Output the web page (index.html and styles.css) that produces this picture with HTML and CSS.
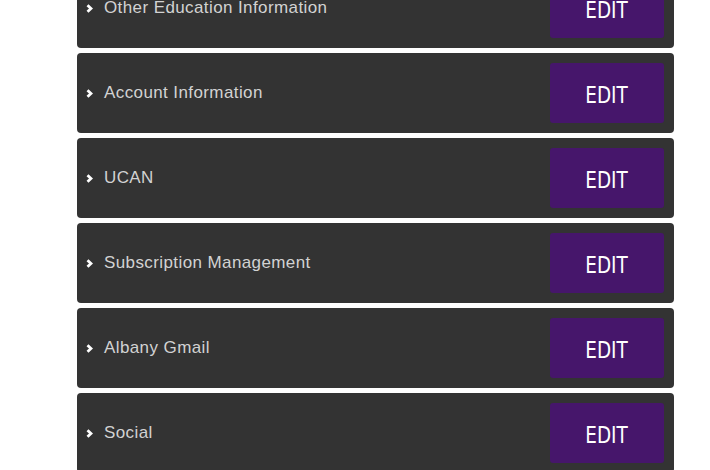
FILE: index.html
```html
<!DOCTYPE html>
<html lang="en">
<head>
    <meta charset="UTF-8">
    <title>Profile Sections</title>
    <link rel="stylesheet" href="styles.css">
</head>
<body>
<div class="container">
    <div class="section-list">
        <div class="section-row">
            <span class="section-title"><svg class="chevron" viewBox="0 0 7 9"><polyline points="1.5,1.2 5,4.5 1.5,7.8"/></svg>Other Education Information</span>
            <button class="edit-button"><span>EDIT</span></button>
        </div>
        <div class="section-row">
            <span class="section-title"><svg class="chevron" viewBox="0 0 7 9"><polyline points="1.5,1.2 5,4.5 1.5,7.8"/></svg>Account Information</span>
            <button class="edit-button"><span>EDIT</span></button>
        </div>
        <div class="section-row">
            <span class="section-title"><svg class="chevron" viewBox="0 0 7 9"><polyline points="1.5,1.2 5,4.5 1.5,7.8"/></svg>UCAN</span>
            <button class="edit-button"><span>EDIT</span></button>
        </div>
        <div class="section-row">
            <span class="section-title"><svg class="chevron" viewBox="0 0 7 9"><polyline points="1.5,1.2 5,4.5 1.5,7.8"/></svg>Subscription Management</span>
            <button class="edit-button"><span>EDIT</span></button>
        </div>
        <div class="section-row">
            <span class="section-title"><svg class="chevron" viewBox="0 0 7 9"><polyline points="1.5,1.2 5,4.5 1.5,7.8"/></svg>Albany Gmail</span>
            <button class="edit-button"><span>EDIT</span></button>
        </div>
        <div class="section-row">
            <span class="section-title"><svg class="chevron" viewBox="0 0 7 9"><polyline points="1.5,1.2 5,4.5 1.5,7.8"/></svg>Social</span>
            <button class="edit-button"><span>EDIT</span></button>
        </div>
    </div>
</div>
</body>
</html>
```

FILE: styles.css
```css
:root {
    --panel: #333333;
    --purple: #46166b;
    --text: #d2d2d2;
    --light: #fff;
}
* {
    margin: 0;
    padding: 0;
    box-sizing: border-box;
}
body {
    background: var(--light);
    font-family: 'Liberation Sans', Arial, sans-serif;
    overflow: hidden;
}
.container {
    width: 597px;
    margin-left: 77px;
    margin-top: -32px;
}
.section-list {
    display: flex;
    flex-direction: column;
    gap: 5px;
}
.section-row {
    height: 80px;
    background: var(--panel);
    border-radius: 4px;
    display: flex;
    align-items: center;
    justify-content: space-between;
    padding: 10px 10px 10px 9px;
}
.section-title {
    display: flex;
    align-items: center;
    color: var(--text);
    font-size: 17px;
    letter-spacing: 0.4px;
    padding-bottom: 1px;
}
.chevron {
    width: 7px;
    height: 9px;
    margin-right: 11px;
    margin-top: 1px;
    fill: none;
    stroke: var(--light);
    stroke-width: 2.8;
}
.edit-button {
    width: 114px;
    height: 60px;
    border: none;
    border-radius: 3px;
    background: var(--purple);
    color: var(--light);
    font-family: 'DejaVu Sans', sans-serif;
    font-size: 23px;
    padding-top: 3px;
    cursor: pointer;
}
.edit-button span {
    display: inline-block;
    transform: scaleX(0.8);
}
```
